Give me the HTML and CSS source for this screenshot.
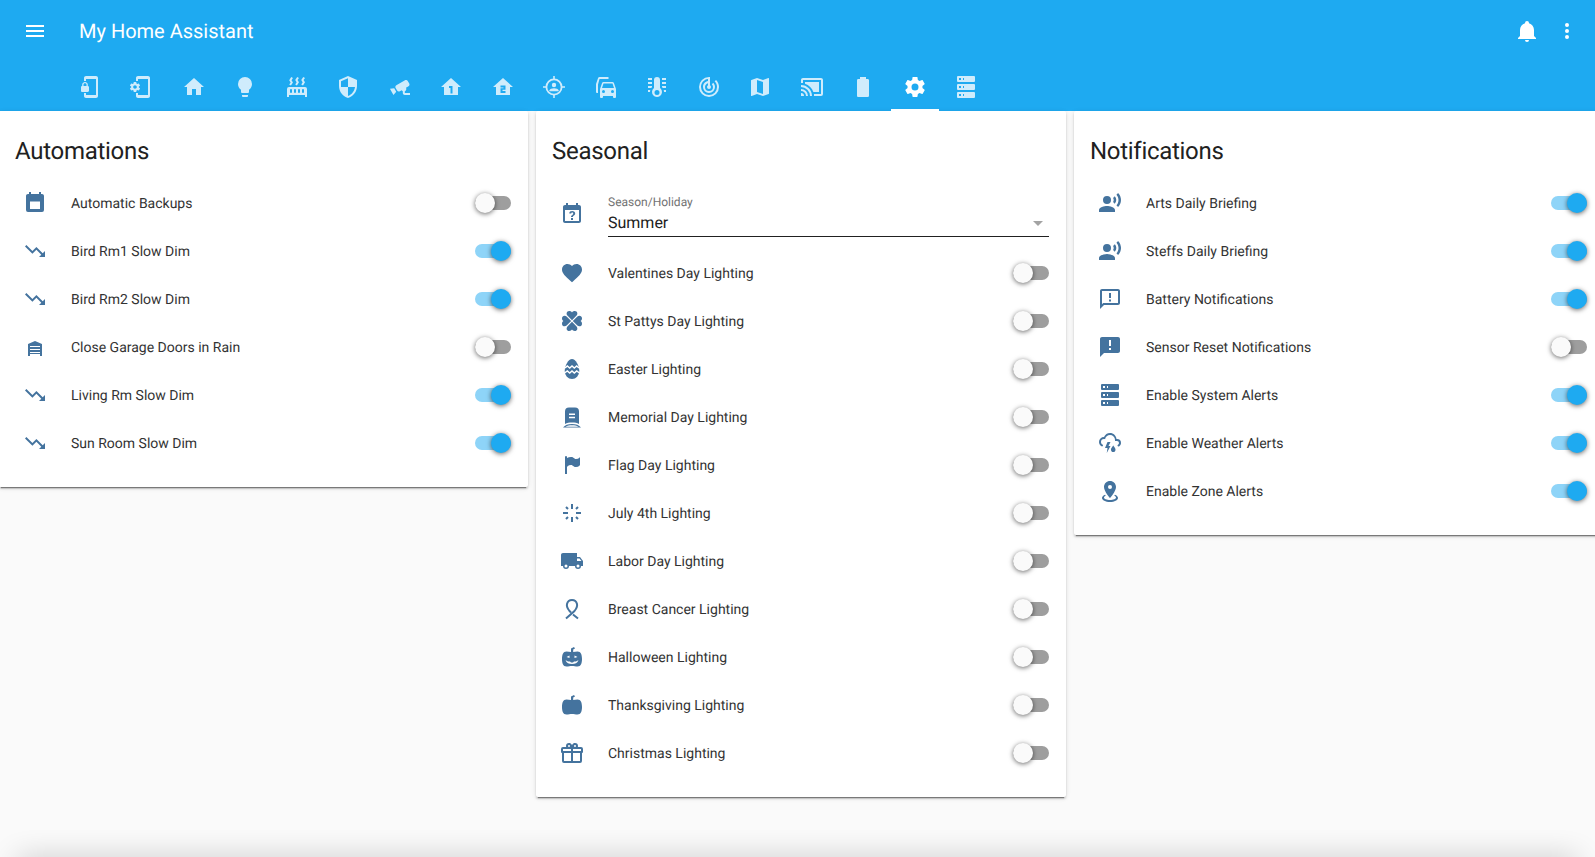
FILE: index.html
```html
<!DOCTYPE html>
<html>
<head>
  <title>My Home Assistant</title>
  <link rel="stylesheet" href="styles.css">
</head>
<body>

  <svg class="sprite" xmlns="http://www.w3.org/2000/svg">
    <symbol id="i-menu" viewBox="0 0 24 24"><path d="M3,6H21V8H3V6M3,11H21V13H3V11M3,16H21V18H3V16Z"/></symbol>
    <symbol id="i-bell" viewBox="0 0 24 24"><path d="M21,19V20H3V19L5,17V11C5,7.9 7.03,5.17 10,4.29C10,4.19 10,4.1 10,4A2,2 0 0,1 12,2A2,2 0 0,1 14,4C14,4.1 14,4.19 14,4.29C16.97,5.17 19,7.9 19,11V17L21,19M14,21A2,2 0 0,1 12,23A2,2 0 0,1 10,21"/></symbol>
    <symbol id="i-dots" viewBox="0 0 24 24"><path d="M12,16A2,2 0 0,1 14,18A2,2 0 0,1 12,20A2,2 0 0,1 10,18A2,2 0 0,1 12,16M12,10A2,2 0 0,1 14,12A2,2 0 0,1 12,14A2,2 0 0,1 10,12A2,2 0 0,1 12,10M12,4A2,2 0 0,1 14,6A2,2 0 0,1 12,8A2,2 0 0,1 10,6A2,2 0 0,1 12,4Z"/></symbol>

    <symbol id="i-phone-lock" viewBox="0 0 24 24"><path d="M19 1H9C7.9 1 7 1.9 7 3V6H9V4H19V20H9V18H7V21C7 22.1 7.9 23 9 23H19C20.1 23 21 22.1 21 21V3C21 1.9 20.1 1 19 1M10.8 11V9.5C10.8 8.1 9.4 7 8 7S5.2 8.1 5.2 9.5V11C4.6 11 4 11.6 4 12.2V15.7C4 16.4 4.6 17 5.2 17H10.7C11.4 17 12 16.4 12 15.8V12.3C12 11.6 11.4 11 10.8 11M9.5 11H6.5V9.5C6.5 8.7 7.2 8.2 8 8.2S9.5 8.7 9.5 9.5V11Z" fill-rule="evenodd"/></symbol>
    <symbol id="i-phone-gear" viewBox="0 0 24 24"><path d="M9.82 12.5C9.84 12.33 9.86 12.17 9.86 12S9.84 11.67 9.82 11.5L10.9 10.69C11 10.62 11 10.5 10.96 10.37L9.93 8.64C9.87 8.53 9.73 8.5 9.62 8.53L8.34 9.03C8.07 8.83 7.78 8.67 7.47 8.54L7.27 7.21C7.27 7.09 7.16 7 7.03 7H5C4.85 7 4.74 7.09 4.72 7.21L4.5 8.53C4.21 8.65 3.92 8.83 3.65 9.03L2.37 8.5C2.25 8.47 2.12 8.5 2.06 8.63L1.03 10.36C.97 10.5 1 10.61 1.1 10.69L2.18 11.5C2.16 11.67 2.15 11.83 2.15 12S2.16 12.33 2.18 12.5L1.1 13.32C1 13.39 .97 13.53 1.03 13.64L2.06 15.37C2.12 15.5 2.25 15.5 2.37 15.5L3.65 15C3.92 15.18 4.21 15.34 4.5 15.47L4.72 16.79C4.74 16.91 4.85 17 5 17H7.03C7.16 17 7.27 16.91 7.29 16.79L7.5 15.47C7.8 15.34 8.09 15.18 8.36 15L9.64 15.5C9.76 15.53 9.89 15.5 9.95 15.37L10.98 13.64C11.04 13.53 11 13.4 10.92 13.32L9.82 12.5M6 13.75C5 13.75 4.2 12.97 4.2 12S5 10.25 6 10.25 7.8 11.03 7.8 12 7 13.75 6 13.75M19 1H9C7.9 1 7 1.9 7 3V6H9V4H19V20H9V18H7V21C7 22.1 7.9 23 9 23H19C20.1 23 21 22.1 21 21V3C21 1.9 20.1 1 19 1Z" fill-rule="evenodd"/></symbol>
    <symbol id="i-home" viewBox="0 0 24 24"><path d="M10,20V14H14V20H19V12H22L12,3L2,12H5V20H10Z"/></symbol>
    <symbol id="i-bulb" viewBox="0 0 24 24"><path d="M12,2A7,7 0 0,0 5,9C5,11.38 6.19,13.47 8,14.74V17A1,1 0 0,0 9,18H15A1,1 0 0,0 16,17V14.74C17.81,13.47 19,11.38 19,9A7,7 0 0,0 12,2M9,21A1,1 0 0,0 10,22H14A1,1 0 0,0 15,21V20H9V21Z"/></symbol>
    <symbol id="i-radiator" viewBox="0 0 24 24"><path d="M7.95,3L6.53,5.19L7.95,7.4H7.94L5.95,10.5L4.22,9.6L5.64,7.39L4.22,5.19L6.22,2.09L7.95,3M13.95,2.89L12.53,5.1L13.95,7.3L13.94,7.31L11.95,10.4L10.22,9.5L11.64,7.3L10.22,5.1L12.22,2L13.95,2.89M20,2.89L18.56,5.1L20,7.3V7.31L18,10.4L16.25,9.5L17.67,7.3L16.25,5.1L18.25,2L20,2.89M2,22V14A2,2 0 0,1 4,12H20A2,2 0 0,1 22,14V22H20V20H4V22H2M6,14A1,1 0 0,0 5,15V17A1,1 0 0,0 6,18A1,1 0 0,0 7,17V15A1,1 0 0,0 6,14M10,14A1,1 0 0,0 9,15V17A1,1 0 0,0 10,18A1,1 0 0,0 11,17V15A1,1 0 0,0 10,14M14,14A1,1 0 0,0 13,15V17A1,1 0 0,0 14,18A1,1 0 0,0 15,17V15A1,1 0 0,0 14,14M18,14A1,1 0 0,0 17,15V17A1,1 0 0,0 18,18A1,1 0 0,0 19,17V15A1,1 0 0,0 18,14Z" fill-rule="evenodd"/></symbol>
    <symbol id="i-security" viewBox="0 0 24 24"><path d="M12,12H19C18.47,16.11 15.72,19.78 12,20.92V12H5V6.3L12,3.19M12,1L3,5V11C3,16.55 6.84,21.73 12,23C17.16,21.73 21,16.55 21,11V5L12,1Z"/></symbol>
    <symbol id="i-cctv" viewBox="0 0 24 24"><path d="M18.15,4.94C17.77,4.91 17.37,5 17,5.2L8.35,10.2C7.39,10.76 7.07,12 7.62,12.94L9.12,15.53C9.67,16.5 10.89,16.82 11.85,16.27L13.65,15.23C13.92,15.69 14.32,16.06 14.81,16.27V18.04C14.81,19.13 15.7,20 16.81,20H22V18.04H16.81V16.27C17.72,15.87 18.31,14.97 18.31,14C18.31,13.54 18.19,13.11 17.97,12.73L20.5,11.27C21.47,10.71 21.8,9.5 21.24,8.53L19.74,5.94C19.4,5.34 18.79,5 18.15,4.94M6.22,13.17L2,13.87L2.75,15.17L4.75,18.63L5.5,19.93L8.22,16.63L6.22,13.17Z"/></symbol>
    <symbol id="i-floor-1" viewBox="0 0 24 24"><path fill-rule="evenodd" d="M12,3L2,12H5V20H19V12H22L12,3ZM10,11H13.5V18.5H11.5V13H10V11Z"/></symbol>
    <symbol id="i-floor-2" viewBox="0 0 24 24"><path fill-rule="evenodd" d="M12,3L2,12H5V20H19V12H22L12,3ZM9.5,10.5H14.5V14.8H11.5V16H14.5V18H9.5V13.2H12.5V12.5H9.5V10.5Z"/></symbol>
    <symbol id="i-target" viewBox="0 0 24 24">
      <path fill-rule="evenodd" d="M12,3.5A8.5,8.5 0 1,1 12,20.5A8.5,8.5 0 1,1 12,3.5ZM12,5.3A6.7,6.7 0 1,0 12,18.7A6.7,6.7 0 1,0 12,5.3Z"/>
      <path d="M11.2,1H12.8V4.5H11.2ZM11.2,19.5H12.8V23H11.2ZM1,11.2H4.5V12.8H1ZM19.5,11.2H23V12.8H19.5Z"/>
      <circle cx="12" cy="10" r="2.2"/>
      <path d="M7.5,16.2V15.3C7.5,13.9 10,13.2 12,13.2C14,13.2 16.5,13.9 16.5,15.3V16.2Z"/>
    </symbol>
    <symbol id="i-cars" viewBox="0 0 24 24"><path fill-rule="evenodd" d="M8,13L9.5,8.5H18.5L20,13H8ZM18.5,18A1.5,1.5 0 0,1 17,16.5A1.5,1.5 0 0,1 18.5,15A1.5,1.5 0 0,1 20,16.5A1.5,1.5 0 0,1 18.5,18ZM9.5,18A1.5,1.5 0 0,1 8,16.5A1.5,1.5 0 0,1 9.5,15A1.5,1.5 0 0,1 11,16.5A1.5,1.5 0 0,1 9.5,18ZM19.92,8C19.71,7.4 19.14,7 18.5,7H9.5C8.86,7 8.29,7.4 8.08,8L6,14V22A1,1 0 0,0 7,23H8A1,1 0 0,0 9,22V21H19V22A1,1 0 0,0 20,23H21A1,1 0 0,0 22,22V14L19.92,8ZM14.5,2H5.5C4.86,2 4.29,2.4 4.08,3L2,9V17A1,1 0 0,0 3,18H4V9.5L5.5,4H14.5V2Z"/></symbol>
    <symbol id="i-thermo" viewBox="0 0 24 24"><path fill-rule="evenodd" d="M17,3H21V5H17V3M17,7H21V9H17V7M17,11H21V13H17.75L17,12.1V11M21,15V17H19C19,16.31 18.9,15.63 18.71,15H21M7,3V5H3V3H7M7,7V9H3V7H7M7,11V12.1L6.25,13H3V11H7M3,15H5.29C5.1,15.63 5,16.31 5,17H3V15M15,13V5A3,3 0 0,0 12,2A3,3 0 0,0 9,5V13C6.79,14.66 6.34,17.79 8,20S12.79,22.66 15,21S17.66,16.21 16,14C15.72,13.62 15.38,13.28 15,13M12,15A2.5,2.5 0 0,1 14.5,17.5A2.5,2.5 0 0,1 12,20A2.5,2.5 0 0,1 9.5,17.5A2.5,2.5 0 0,1 12,15Z"/></symbol>
    <symbol id="i-radar" viewBox="0 0 24 24"><path d="M19.07,4.93L17.66,6.34C19.1,7.79 20,9.79 20,12A8,8 0 0,1 12,20A8,8 0 0,1 4,12C4,7.92 7.05,4.56 11,4.07V6.09C8.16,6.57 6,9.03 6,12A6,6 0 0,0 12,18A6,6 0 0,0 18,12C18,10.34 17.33,8.84 16.24,7.76L14.83,9.17C15.55,9.9 16,10.9 16,12A4,4 0 0,1 12,16A4,4 0 0,1 8,12C8,10.14 9.28,8.59 11,8.14V10.28C10.4,10.63 10,11.26 10,12A2,2 0 0,0 12,14A2,2 0 0,0 14,12C14,11.26 13.6,10.62 13,10.28V2H12A10,10 0 0,0 2,12A10,10 0 0,0 12,22A10,10 0 0,0 22,12C22,9.24 20.88,6.74 19.07,4.93Z"/></symbol>
    <symbol id="i-map" viewBox="0 0 24 24"><path d="M15,19L9,16.89V5L15,7.11M20.5,3C20.44,3 20.39,3 20.34,3L15,5.1L9,3L3.36,4.9C3.15,4.97 3,5.15 3,5.38V20.5A0.5,0.5 0 0,0 3.5,21C3.55,21 3.61,21 3.66,20.97L9,18.9L15,21L20.64,19.1C20.85,19 21,18.85 21,18.62V3.5A0.5,0.5 0 0,0 20.5,3Z"/></symbol>
    <symbol id="i-cast" viewBox="0 0 24 24"><path d="M21,3H3C1.89,3 1,3.89 1,5V8H3V5H21V19H14V21H21A2,2 0 0,0 23,19V5C23,3.89 22.1,3 21,3M1,10V12A9,9 0 0,1 10,21H12C12,14.92 7.08,10 1,10M19,7H5V8.63C8.96,9.91 12.09,13.04 13.37,17H19M1,14V16A5,5 0 0,1 6,21H8A7,7 0 0,0 1,14M1,18V21H4A3,3 0 0,0 1,18Z"/></symbol>
    <symbol id="i-battery" viewBox="0 0 24 24"><path d="M16.67,4H15V2H9V4H7.33A1.33,1.33 0 0,0 6,5.33V20.67C6,21.4 6.6,22 7.33,22H16.67A1.33,1.33 0 0,0 18,20.67V5.33C18,4.6 17.4,4 16.67,4Z"/></symbol>
    <symbol id="i-gear" viewBox="0 0 24 24"><path d="M12,15.5A3.5,3.5 0 0,1 8.5,12A3.5,3.5 0 0,1 12,8.5A3.5,3.5 0 0,1 15.5,12A3.5,3.5 0 0,1 12,15.5M19.43,12.97C19.47,12.65 19.5,12.33 19.5,12C19.5,11.67 19.47,11.34 19.43,11L21.54,9.37C21.73,9.22 21.78,8.95 21.66,8.73L19.66,5.27C19.54,5.05 19.27,4.96 19.05,5.05L16.56,6.05C16.04,5.66 15.5,5.32 14.87,5.07L14.5,2.42C14.46,2.18 14.25,2 14,2H10C9.75,2 9.54,2.18 9.5,2.42L9.13,5.07C8.5,5.32 7.96,5.66 7.44,6.05L4.95,5.05C4.73,4.96 4.46,5.05 4.34,5.27L2.34,8.73C2.21,8.95 2.27,9.22 2.46,9.37L4.57,11C4.53,11.34 4.5,11.67 4.5,12C4.5,12.33 4.53,12.65 4.57,12.97L2.46,14.63C2.27,14.78 2.21,15.05 2.34,15.27L4.34,18.73C4.46,18.95 4.73,19.03 4.95,18.95L7.44,17.94C7.96,18.34 8.5,18.68 9.13,18.93L9.5,21.58C9.54,21.82 9.75,22 10,22H14C14.25,22 14.46,21.82 14.5,21.58L14.87,18.93C15.5,18.67 16.04,18.34 16.56,17.94L19.05,18.95C19.27,19.03 19.54,18.95 19.66,18.73L21.66,15.27C21.78,15.05 21.73,14.78 21.54,14.63L19.43,12.97Z"/></symbol>
    <symbol id="i-server" viewBox="0 0 24 24"><path fill-rule="evenodd" d="M4,1H20A1,1 0 0,1 21,2V6A1,1 0 0,1 20,7H4A1,1 0 0,1 3,6V2A1,1 0 0,1 4,1M4,9H20A1,1 0 0,1 21,10V14A1,1 0 0,1 20,15H4A1,1 0 0,1 3,14V10A1,1 0 0,1 4,9M4,17H20A1,1 0 0,1 21,18V22A1,1 0 0,1 20,23H4A1,1 0 0,1 3,22V18A1,1 0 0,1 4,17M9,5H10V3H9V5M9,13H10V11H9V13M9,21H10V19H9V21M5,3V5H7V3H5M5,11V13H7V11H5M5,19V21H7V19H5Z"/></symbol>

    <symbol id="i-calendar" viewBox="0 0 24 24"><path fill-rule="evenodd" d="M17,18H7V10.5H17V18M16,1V3H8V1H6V3H5C3.89,3 3,3.89 3,5V19A2,2 0 0,0 5,21H19A2,2 0 0,0 21,19V5C21,3.89 20.1,3 19,3H18V1H16Z"/></symbol>
    <symbol id="i-trend" viewBox="0 0 24 24"><path d="M16,18L18.29,15.71L13.41,10.83L9.41,14.83L2,7.41L3.41,6L9.41,12L13.41,8L19.71,14.29L22,12V18H16Z"/></symbol>
    <symbol id="i-garage" viewBox="0 0 24 24"><path fill-rule="evenodd" d="M12,6L19,9V21H17V19H7V21H5V9L12,6ZM7,11V12H17V11H7ZM7,14V15H17V14H7ZM7,17V18H17V17H7Z"/></symbol>
    <symbol id="i-cal-q" viewBox="0 0 24 24"><path fill-rule="evenodd" d="M6 1V3H5C3.89 3 3 3.89 3 5V19C3 20.1 3.89 21 5 21H19C20.1 21 21 20.1 21 19V5C21 3.89 20.1 3 19 3H18V1H16V3H8V1H6M5 8H19V19H5V8M12.19 9C11.32 9 10.62 9.2 10.08 9.59C9.56 10 9.3 10.57 9.31 11.36L9.32 11.39H11.25C11.26 11.09 11.35 10.86 11.53 10.7C11.71 10.55 11.93 10.47 12.19 10.47C12.5 10.47 12.76 10.57 12.94 10.75C13.12 10.94 13.2 11.2 13.2 11.5C13.2 11.82 13.13 12.09 12.97 12.32C12.83 12.55 12.62 12.75 12.36 12.91C11.85 13.25 11.5 13.55 11.31 13.82C11.11 14.08 11 14.5 11 15H13C13 14.69 13.04 14.44 13.13 14.26C13.22 14.08 13.39 13.9 13.64 13.74C14.09 13.5 14.46 13.21 14.75 12.81C15.04 12.41 15.19 12 15.19 11.5C15.19 10.74 14.92 10.13 14.38 9.68C13.85 9.23 13.12 9 12.19 9M11 16V18H13V16H11Z"/></symbol>
    <symbol id="i-heart" viewBox="0 0 24 24"><path d="M12,21.35L10.55,20.03C5.4,15.36 2,12.27 2,8.5C2,5.41 4.42,3 7.5,3C9.24,3 10.91,3.81 12,5.08C13.09,3.81 14.76,3 16.5,3C19.58,3 22,5.41 22,8.5C22,12.27 18.6,15.36 13.45,20.03L12,21.35Z"/></symbol>
    <symbol id="i-clover" viewBox="0 0 24 24">
      <path id="leaf" d="M12,11.2L7.4,6.6C6,5 6.5,2 9.2,2C10.6,2 11.5,2.6 12,3.4C12.5,2.6 13.4,2 14.8,2C17.5,2 18,5 16.6,6.6Z"/>
      <use href="#leaf" transform="rotate(90 12 12)"/>
      <use href="#leaf" transform="rotate(180 12 12)"/>
      <use href="#leaf" transform="rotate(270 12 12)"/>
    </symbol>
    <symbol id="i-egg" viewBox="0 0 24 24">
      <path d="M12,2C8.5,2 4.7,8.5 4.7,14A7.3,8 0 0,0 19.3,14C19.3,8.5 15.5,2 12,2Z"/>
      <path class="cut" d="M5,11L7.3,9L9.7,11L12,9L14.3,11L16.7,9L19,11M4.5,16L7.3,14L9.7,16L12,14L14.3,16L16.7,14L19.5,16"/>
    </symbol>
    <symbol id="i-grave" viewBox="0 0 24 24">
      <path d="M9,2.5H15A4,4 0 0,1 19,6.5V19C17,18 15,17.6 12,17.6C9,17.6 7,18 5,19V6.5A4,4 0 0,1 9,2.5Z"/>
      <path d="M3,22.5C5,20 8,19 12,19C16,19 19,20 21,22.5H3Z"/>
      <path class="slot" d="M9,8.5H15V10H9V8.5M9,11.8H15V13.3H9V11.8Z"/>
      <path class="slot" d="M5.5,21.8C7.5,20.6 9.5,20.3 12,20.3C14.5,20.3 16.5,20.6 18.5,21.8H5.5Z"/>
    </symbol>
    <symbol id="i-flag" viewBox="0 0 24 24"><path d="M6,3A1,1 0 0,1 7,4V4.88C8.06,4.44 9.5,4 11,4C14,4 14,6 16,6C19,6 20,4 20,4V12C20,12 19,14 16,14C13,14 13,12 11,12C8,12 7,14 7,14V21H5V4A1,1 0 0,1 6,3Z"/></symbol>
    <symbol id="i-burst" viewBox="0 0 24 24">
      <path class="ray" d="M12,3V8M12,16V21M3,12H8M16,12H21M6,6L8,8M18,6L16,8M6,18L8,16M18,18L16,16"/>
    </symbol>
    <symbol id="i-truck" viewBox="0 0 24 24"><path fill-rule="evenodd" d="M18,18.5A1.5,1.5 0 0,1 16.5,17A1.5,1.5 0 0,1 18,15.5A1.5,1.5 0 0,1 19.5,17A1.5,1.5 0 0,1 18,18.5M19.5,9.5L21.46,12H17V9.5M6,18.5A1.5,1.5 0 0,1 4.5,17A1.5,1.5 0 0,1 6,15.5A1.5,1.5 0 0,1 7.5,17A1.5,1.5 0 0,1 6,18.5M20,8H17V4H3C1.89,4 1,4.89 1,6V17H3A3,3 0 0,0 6,20A3,3 0 0,0 9,17H15A3,3 0 0,0 18,20A3,3 0 0,0 21,17H23V12L20,8Z"/></symbol>
    <symbol id="i-ribbon" viewBox="0 0 24 24"><path class="line" d="M6,21.5L14.5,14C16.5,11.5 17.6,9.5 17,7C16.3,4 14,3 12,3C10,3 7.7,4 7,7C6.4,9.5 7.5,11.5 9.5,14L11,15.5M13,17.5L18,21.5"/></symbol>
    <symbol id="i-pumpkin-face" viewBox="0 0 24 24">
      <path d="M6.5,6.5C3,6.5 2,10 2,14C2,18 3,21.5 6.5,21.5C8.5,21.5 10,21 12,21C14,21 15.5,21.5 17.5,21.5C21,21.5 22,18 22,14C22,10 21,6.5 17.5,6.5C16,6.5 14.5,7 13.2,7V4.5L15,3.5L14,2L11,3.5V7C9.5,7 8,6.5 6.5,6.5Z"/>
      <path class="slot" d="M6.5,12L9.5,10.5V13L6.5,12M17.5,12L14.5,10.5V13L17.5,12M5.5,15C8,17 9,16.5 10,16.5L11,17.5L13,17.5L14,16.5C15,16.5 16,17 18.5,15C17.5,18 15,19 12,19C9,19 6.5,18 5.5,15Z"/>
    </symbol>
    <symbol id="i-pumpkin" viewBox="0 0 24 24"><path d="M6.5,6.5C3,6.5 2,10 2,14C2,18 3,21.5 6.5,21.5C8.5,21.5 10,21 12,21C14,21 15.5,21.5 17.5,21.5C21,21.5 22,18 22,14C22,10 21,6.5 17.5,6.5C16,6.5 14.5,7 13.2,7V4.5L15,3.5L14,2L11,3.5V7C9.5,7 8,6.5 6.5,6.5Z"/></symbol>
    <symbol id="i-gift" viewBox="0 0 24 24"><path fill-rule="evenodd" d="M22,12V20A2,2 0 0,1 20,22H4A2,2 0 0,1 2,20V12A1,1 0 0,1 1,11V8A2,2 0 0,1 3,6H6.17C6.06,5.69 6,5.35 6,5A3,3 0 0,1 9,2C10,2 10.88,2.5 11.43,3.24V3.23L12,4L12.57,3.23V3.24C13.12,2.5 14,2 15,2A3,3 0 0,1 18,5C18,5.35 17.94,5.69 17.83,6H21A2,2 0 0,1 23,8V11A1,1 0 0,1 22,12M4,20H11V12H4V20M20,20V12H13V20H20M9,4A1,1 0 0,0 8,5A1,1 0 0,0 9,6A1,1 0 0,0 10,5A1,1 0 0,0 9,4M15,4A1,1 0 0,0 14,5A1,1 0 0,0 15,6A1,1 0 0,0 16,5A1,1 0 0,0 15,4M3,8V10H11V8H3M13,8V10H21V8H13Z"/></symbol>

    <symbol id="i-voice" viewBox="0 0 24 24"><path d="M9,5A4,4 0 0,1 13,9A4,4 0 0,1 9,13A4,4 0 0,1 5,9A4,4 0 0,1 9,5M9,15C11.67,15 17,16.34 17,19V21H1V19C1,16.34 6.33,15 9,15M16.76,5.36C18.78,7.56 18.78,10.61 16.76,12.63L15.08,10.94C15.92,9.76 15.92,8.23 15.08,7.05L16.76,5.36M20.07,2C24,6.05 23.97,12.11 20.07,16L18.44,14.37C21.21,11.19 21.21,6.65 18.44,3.63L20.07,2Z"/></symbol>
    <symbol id="i-msg-line" viewBox="0 0 24 24"><path fill-rule="evenodd" d="M20,2H4C2.9,2 2,2.9 2,4V22L6,18H20C21.1,18 22,17.1 22,16V4C22,2.9 21.1,2 20,2M20,16H5.17L4,17.17V4H20V16M11,6H13V11H11V6M11,12.5H13V14.5H11V12.5Z"/></symbol>
    <symbol id="i-msg" viewBox="0 0 24 24"><path fill-rule="evenodd" d="M20,2H4C2.9,2 2,2.9 2,4V22L6,18H20C21.1,18 22,17.1 22,16V4C22,2.9 21.1,2 20,2M13,11H11V5H13V11M13,15H11V13H13V15Z"/></symbol>
    <symbol id="i-storm" viewBox="0 0 24 24"><path d="M4.5,13.59C5,13.87 5.14,14.5 4.87,14.96C4.59,15.44 4,15.6 3.5,15.33V15.33C2,14.47 1,12.85 1,11A5,5 0 0,1 6,6C7,3.65 9.3,2 12,2C15.43,2 18.24,4.66 18.5,8.03L19,8A4,4 0 0,1 23,12C23,13.5 22.2,14.77 21,15.46V15.46C20.5,15.73 19.91,15.57 19.63,15.09C19.36,14.61 19.5,14 20,13.72V13.73C20.6,13.39 21,12.74 21,12A2,2 0 0,0 19,10H17V9A5,5 0 0,0 12,4C9.5,4 7.45,5.82 7.06,8.19C6.73,8.07 6.37,8 6,8A3,3 0 0,0 3,11C3,12.11 3.6,13.08 4.5,13.6V13.59M9.5,11H12.5L10.5,15H12.5L8.75,22L9.5,17H7L9.5,11M17.5,18.67C17.5,19.96 16.5,21 15.25,21C14,21 13,19.96 13,18.67C13,17.12 15.25,14.5 15.25,14.5C15.25,14.5 17.5,17.12 17.5,18.67Z"/></symbol>
    <symbol id="i-marker" viewBox="0 0 24 24"><path fill-rule="evenodd" d="M12,2C15.31,2 18,4.66 18,7.95C18,12.41 12,19 12,19C12,19 6,12.41 6,7.95C6,4.66 8.69,2 12,2M12,6A2,2 0 0,0 10,8A2,2 0 0,0 12,10A2,2 0 0,0 14,8A2,2 0 0,0 12,6M20,19C20,21.21 16.42,23 12,23C7.58,23 4,21.21 4,19C4,17.71 5.22,16.56 7.11,15.83L7.75,16.74C6.67,17.19 6,17.81 6,18.5C6,19.88 8.69,21 12,21C15.31,21 18,19.88 18,18.5C18,17.81 17.33,17.19 16.25,16.74L16.89,15.83C18.78,16.56 20,17.71 20,19Z"/></symbol>
  </svg>

  <header class="app-header">
    <div class="toolbar">
      <svg class="tool-icon"><use href="#i-menu"/></svg>
      <div class="app-title">My Home Assistant</div>
      <svg class="tool-icon bell"><use href="#i-bell"/></svg>
      <svg class="tool-icon dots"><use href="#i-dots"/></svg>
    </div>
    <nav class="tabs">
      <div class="tab"><svg class="phone-lock"><use href="#i-phone-lock"/></svg></div>
      <div class="tab"><svg class="phone-gear"><use href="#i-phone-gear"/></svg></div>
      <div class="tab"><svg><use href="#i-home"/></svg></div>
      <div class="tab"><svg><use href="#i-bulb"/></svg></div>
      <div class="tab"><svg><use href="#i-radiator"/></svg></div>
      <div class="tab"><svg><use href="#i-security"/></svg></div>
      <div class="tab"><svg><use href="#i-cctv"/></svg></div>
      <div class="tab"><svg><use href="#i-floor-1"/></svg></div>
      <div class="tab"><svg><use href="#i-floor-2"/></svg></div>
      <div class="tab"><svg><use href="#i-target"/></svg></div>
      <div class="tab"><svg><use href="#i-cars"/></svg></div>
      <div class="tab"><svg><use href="#i-thermo"/></svg></div>
      <div class="tab"><svg><use href="#i-radar"/></svg></div>
      <div class="tab"><svg><use href="#i-map"/></svg></div>
      <div class="tab"><svg><use href="#i-cast"/></svg></div>
      <div class="tab"><svg><use href="#i-battery"/></svg></div>
      <div class="tab active"><svg><use href="#i-gear"/></svg></div>
      <div class="tab"><svg><use href="#i-server"/></svg></div>
    </nav>
  </header>

  <main class="columns">
    <section class="card card-first">
      <h2 class="card-title">Automations</h2>
      <div class="row"><svg class="row-icon"><use href="#i-calendar"/></svg><span class="row-name">Automatic Backups</span><span class="toggle"></span></div>
      <div class="row"><svg class="row-icon"><use href="#i-trend"/></svg><span class="row-name">Bird Rm1 Slow Dim</span><span class="toggle on"></span></div>
      <div class="row"><svg class="row-icon"><use href="#i-trend"/></svg><span class="row-name">Bird Rm2 Slow Dim</span><span class="toggle on"></span></div>
      <div class="row"><svg class="row-icon"><use href="#i-garage"/></svg><span class="row-name">Close Garage Doors in Rain</span><span class="toggle"></span></div>
      <div class="row"><svg class="row-icon"><use href="#i-trend"/></svg><span class="row-name">Living Rm Slow Dim</span><span class="toggle on"></span></div>
      <div class="row"><svg class="row-icon"><use href="#i-trend"/></svg><span class="row-name">Sun Room Slow Dim</span><span class="toggle on"></span></div>
    </section>

    <section class="card">
      <h2 class="card-title">Seasonal</h2>
      <div class="row select-row">
        <svg class="row-icon"><use href="#i-cal-q"/></svg>
        <div class="select">
          <div class="select-label">Season/Holiday</div>
          <div class="select-value">Summer<span class="select-arrow"></span></div>
        </div>
      </div>
      <div class="row"><svg class="row-icon"><use href="#i-heart"/></svg><span class="row-name">Valentines Day Lighting</span><span class="toggle"></span></div>
      <div class="row"><svg class="row-icon"><use href="#i-clover"/></svg><span class="row-name">St Pattys Day Lighting</span><span class="toggle"></span></div>
      <div class="row"><svg class="row-icon"><use href="#i-egg"/></svg><span class="row-name">Easter Lighting</span><span class="toggle"></span></div>
      <div class="row"><svg class="row-icon"><use href="#i-grave"/></svg><span class="row-name">Memorial Day Lighting</span><span class="toggle"></span></div>
      <div class="row"><svg class="row-icon"><use href="#i-flag"/></svg><span class="row-name">Flag Day Lighting</span><span class="toggle"></span></div>
      <div class="row"><svg class="row-icon"><use href="#i-burst"/></svg><span class="row-name">July 4th Lighting</span><span class="toggle"></span></div>
      <div class="row"><svg class="row-icon"><use href="#i-truck"/></svg><span class="row-name">Labor Day Lighting</span><span class="toggle"></span></div>
      <div class="row"><svg class="row-icon"><use href="#i-ribbon"/></svg><span class="row-name">Breast Cancer Lighting</span><span class="toggle"></span></div>
      <div class="row"><svg class="row-icon"><use href="#i-pumpkin-face"/></svg><span class="row-name">Halloween Lighting</span><span class="toggle"></span></div>
      <div class="row"><svg class="row-icon"><use href="#i-pumpkin"/></svg><span class="row-name">Thanksgiving Lighting</span><span class="toggle"></span></div>
      <div class="row"><svg class="row-icon"><use href="#i-gift"/></svg><span class="row-name">Christmas Lighting</span><span class="toggle"></span></div>
    </section>

    <section class="card">
      <h2 class="card-title">Notifications</h2>
      <div class="row"><svg class="row-icon"><use href="#i-voice"/></svg><span class="row-name">Arts Daily Briefing</span><span class="toggle on"></span></div>
      <div class="row"><svg class="row-icon"><use href="#i-voice"/></svg><span class="row-name">Steffs Daily Briefing</span><span class="toggle on"></span></div>
      <div class="row"><svg class="row-icon"><use href="#i-msg-line"/></svg><span class="row-name">Battery Notifications</span><span class="toggle on"></span></div>
      <div class="row"><svg class="row-icon"><use href="#i-msg"/></svg><span class="row-name">Sensor Reset Notifications</span><span class="toggle"></span></div>
      <div class="row"><svg class="row-icon"><use href="#i-server"/></svg><span class="row-name">Enable System Alerts</span><span class="toggle on"></span></div>
      <div class="row"><svg class="row-icon"><use href="#i-storm"/></svg><span class="row-name">Enable Weather Alerts</span><span class="toggle on"></span></div>
      <div class="row"><svg class="row-icon"><use href="#i-marker"/></svg><span class="row-name">Enable Zone Alerts</span><span class="toggle on"></span></div>
    </section>
  </main>

  <div class="bottom-sheet"></div>

</body>
</html>
```

FILE: styles.css
```css
html, body {
  height: 100%;
}

body {
  position: relative;
  margin: 0;
  overflow: hidden;
  background-color: #fafafa;
  font-family: Roboto, "Liberation Sans", sans-serif;
  color: #212121;
  text-rendering: geometricPrecision;
}

.sprite {
  display: none;
}

/* header */
.app-header {
  height: 111px;
  background-color: #1eaaf1;
  color: #fff;
}

.toolbar {
  display: flex;
  align-items: center;
  height: 62px;
  padding-left: 23px;
}

.tool-icon {
  width: 24px;
  height: 24px;
  fill: #fff;
}

.app-title {
  flex: 1;
  margin-left: 32px;
  font-size: 20px;
}

.bell {
  margin-right: 16px;
}

.dots {
  margin-right: 16px;
}

.tabs {
  display: flex;
  height: 49px;
  padding-left: 65px;
}

.tab {
  position: relative;
  display: flex;
  align-items: center;
  justify-content: center;
  width: 51.5px;
}

.tab svg {
  width: 24px;
  height: 24px;
  fill: #cfecfc;
}

.tab .phone-lock {
  margin-left: -4px;
}

.tab .phone-gear {
  margin-left: -2px;
}

.tab.active svg {
  fill: #fff;
}

.tab.active::after {
  content: "";
  position: absolute;
  left: 2px;
  right: 2px;
  bottom: 0;
  height: 2px;
  background-color: #fff;
}

/* cards */
.columns {
  display: flex;
  align-items: flex-start;
  gap: 8px;
  width: 1610px;
  margin-left: -1px;
}

.card {
  width: 530px;
  padding-bottom: 20px;
  background-color: #fff;
  border-radius: 2px;
  box-shadow: 0 2px 2px rgba(0, 0, 0, 0.14), 0 1px 5px rgba(0, 0, 0, 0.12), 0 3px 1px -2px rgba(0, 0, 0, 0.4);
}

.card-first {
  width: 529px;
}

.card-title {
  margin: 0;
  padding: 24px 16px 12px;
  font-size: 24px;
  font-weight: 400;
  line-height: 32px;
  letter-spacing: -0.012em;
  color: #212121;
}

.row {
  display: flex;
  align-items: center;
  height: 48px;
  padding: 0 17px 0 24px;
}

.row-icon {
  flex: none;
  width: 24px;
  height: 24px;
  fill: #44739e;
}

.row-name {
  flex: 1;
  margin-left: 24px;
  padding-top: 2px;
  font-size: 14px;
  color: #333;
}

/* details for the hand drawn icons */
.cut {
  fill: none;
  stroke: #fff;
  stroke-width: 1.5;
}

.slot {
  fill: #fff;
}

.ray {
  fill: none;
  stroke: #44739e;
  stroke-width: 2;
}

.line {
  fill: none;
  stroke: #44739e;
  stroke-width: 2;
}

/* season select */
.select-row {
  height: 70px;
}

.select {
  flex: 1;
  margin-left: 24px;
}

.select-label {
  margin-top: 2px;
  font-size: 12px;
  line-height: 16px;
  color: #737373;
}

.select-value {
  position: relative;
  height: 25px;
  padding-top: 1px;
  border-bottom: 1px solid #212121;
  font-size: 16px;
  line-height: 24px;
  color: #212121;
}

.select-arrow {
  position: absolute;
  right: 6px;
  top: 11px;
  border-left: 5px solid transparent;
  border-right: 5px solid transparent;
  border-top: 5px solid #a3a3a3;
}

/* toggles */
.toggle {
  position: relative;
  flex: none;
  width: 36px;
  height: 14px;
  border-radius: 7px;
  background-color: #9e9e9e;
}

.toggle::after {
  content: "";
  position: absolute;
  top: -3px;
  left: 0;
  width: 20px;
  height: 20px;
  border-radius: 50%;
  background-color: #fafafa;
  box-shadow: 0 1px 5px rgba(0, 0, 0, 0.6);
}

.toggle.on {
  background-color: #8ed4f8;
}

.toggle.on::after {
  left: 16px;
  background-color: #1eaaf1;
}

/* sits on the fold, only its shadow shows */
.bottom-sheet {
  position: absolute;
  bottom: 0;
  left: 24px;
  right: 24px;
  height: 0;
  box-shadow: 0 10px 30px 6px rgba(0, 0, 0, 0.33);
}
```
